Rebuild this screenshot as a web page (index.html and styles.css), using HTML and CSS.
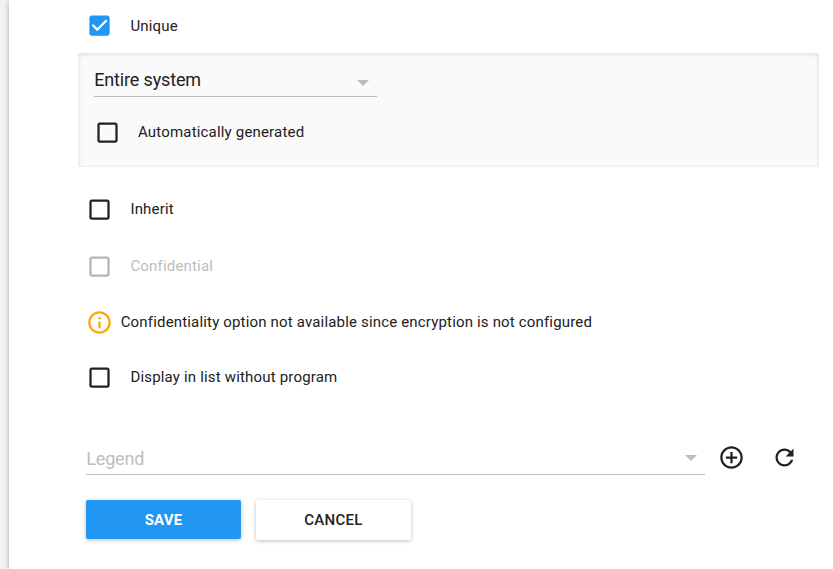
FILE: index.html
```html
<!DOCTYPE html>
<html lang="en">
<head>
<meta charset="utf-8">
<title>Attribute settings</title>
<link rel="stylesheet" href="styles.css">
</head>
<body>
<main class="card">
  <div class="row unique">
    <svg class="box" viewBox="0 0 24 24"><path fill="#2196f3" d="M19 3H5c-1.100 0-2 .9-2 2v14c0 1.100.9 2 2 2h14c1.100 0 2-.9 2-2V5c0-1.100-.9-2-2-2zm-9 14l-5-5 1.410-1.410L10 14.170l7.590-7.590L19 8l-9 9z"/></svg>
    <span class="label">Unique</span>
  </div>
  <section class="panel">
    <div class="select scope"><span>Entire system</span><i class="caret"></i></div>
    <div class="row auto">
      <svg class="box" viewBox="0 0 24 24"><path d="M19 5v14H5V5h14m0-2H5c-1.100 0-2 .9-2 2v14c0 1.100.9 2 2 2h14c1.100 0 2-.9 2-2V5c0-1.100-.9-2-2-2z"/></svg>
      <span class="label">Automatically generated</span>
    </div>
  </section>
  <div class="row inherit">
    <svg class="box" viewBox="0 0 24 24"><path d="M19 5v14H5V5h14m0-2H5c-1.100 0-2 .9-2 2v14c0 1.100.9 2 2 2h14c1.100 0 2-.9 2-2V5c0-1.100-.9-2-2-2z"/></svg>
    <span class="label">Inherit</span>
  </div>
  <div class="row disabled">
    <svg class="box" viewBox="0 0 24 24"><path d="M19 5v14H5V5h14m0-2H5c-1.100 0-2 .9-2 2v14c0 1.100.9 2 2 2h14c1.100 0 2-.9 2-2V5c0-1.100-.9-2-2-2z"/></svg>
    <span class="label">Confidential</span>
  </div>
  <div class="row info">
    <svg class="box" viewBox="0 0 24 24"><path fill="#ffa500" d="M11 17h2v-6h-2v6zm1-15C6.480 2 2 6.480 2 12s4.480 10 10 10 10-4.480 10-10S17.520 2 12 2zm0 18c-4.410 0-8-3.590-8-8s3.590-8 8-8 8 3.590 8 8-3.590 8-8 8zM11 9h2V7h-2v2z"/></svg>
    <span class="label">Confidentiality option not available since encryption is not configured</span>
  </div>
  <div class="row display">
    <svg class="box" viewBox="0 0 24 24"><path d="M19 5v14H5V5h14m0-2H5c-1.100 0-2 .9-2 2v14c0 1.100.9 2 2 2h14c1.100 0 2-.9 2-2V5c0-1.100-.9-2-2-2z"/></svg>
    <span class="label">Display in list without program</span>
  </div>
  <div class="legend-row">
    <div class="select legend"><span>Legend</span><i class="caret"></i></div>
    <svg class="action add" viewBox="0 0 24 24"><path d="M13 7h-2v4H7v2h4v4h2v-4h4v-2h-4V7zm-1-5C6.480 2 2 6.480 2 12s4.480 10 10 10 10-4.480 10-10S17.520 2 12 2zm0 18c-4.410 0-8-3.590-8-8s3.590-8 8-8 8 3.590 8 8-3.590 8-8 8z"/></svg>
    <svg class="action" viewBox="0 0 24 24"><path d="M17.650 6.350C16.200 4.900 14.210 4 12 4c-4.420 0-7.990 3.580-7.990 8s3.570 8 7.990 8c3.730 0 6.840-2.550 7.730-6h-2.080c-.82 2.330-3.040 4-5.650 4-3.310 0-6-2.690-6-6s2.690-6 6-6c1.660 0 3.140.69 4.220 1.780L13 11h7V4l-2.350 2.350z"/></svg>
  </div>
  <div class="buttons">
    <button class="button primary">SAVE</button>
    <button class="button">CANCEL</button>
  </div>
</main>
</body>
</html>
```
FILE: styles.css
```css
* { box-sizing: border-box; }
body { margin: 0; height: 569px; overflow: hidden; background: #f2f2f2; font-family: Roboto, sans-serif; color: #212121; }
.card { margin-left: 9px; height: 569px; padding: 12px 14px 0 69px; background: #fff; box-shadow: 0 1px 5px rgba(0,0,0,.3); }
.row { display: flex; align-items: center; height: 28px; padding-left: 8px; }
.box { width: 27px; height: 27px; flex: none; fill: #212121; }
.label { margin-left: 17.4px; font-size: 15px; font-weight: 400; line-height: 20px; letter-spacing: .18px; white-space: nowrap; }
.unique .box { margin-top: -1px; }
.panel { height: 114px; margin-top: 13px; padding: 13px 16px 0; border-radius: 2px; background: #fafafa; box-shadow: inset 0 1px 4px rgba(0,0,0,.14); }
.select { display: flex; align-items: flex-start; justify-content: space-between; height: 31px; padding-top: 3px; border-bottom: 1px solid #bdbdbd; font-size: 18px; font-weight: 400; line-height: 21px; letter-spacing: -.15px; }
.select span { margin-left: .2px; }
.caret { width: 0; height: 0; border: 6px solid transparent; border-top-color: #bdbdbd; border-bottom: 0; margin: 10.5px 8px 0 0; }
.scope { width: 283px; }
.auto { margin-top: 21px; padding-left: 0; }
.auto .box { margin-left: -.5px; margin-right: .1px; }
.inherit { margin-top: 28px; }
.disabled { margin-top: 29px; color: #bdbdbd; }
.disabled .box { fill: #b5b5b5; }
.info { margin-top: 28px; }
.info .label { margin-left: 7.7px; letter-spacing: .17px; }
.display { margin-top: 27px; }
.legend-row { display: flex; margin: 53px 0 0 8px; }
.legend { width: 619px; padding-top: 4px; color: #bdbdbd; }
.legend .caret { margin-top: 7px; }
.action { width: 27px; height: 27px; margin-left: 26px; fill: #212121; }
.add { margin-left: 13px; }
.buttons { display: flex; gap: 15px; margin: 25px 0 0 8px; }
.button { width: 155px; height: 40px; padding: 0; border: 0; border-radius: 2px; background: #fff; color: #212121; font: 500 15px Roboto, sans-serif; letter-spacing: .3px; box-shadow: 0 1px 4px rgba(0,0,0,.26); }
.primary { height: 39px; background: #2196f3; color: #fff; font-weight: 700; letter-spacing: .15px; }
```
